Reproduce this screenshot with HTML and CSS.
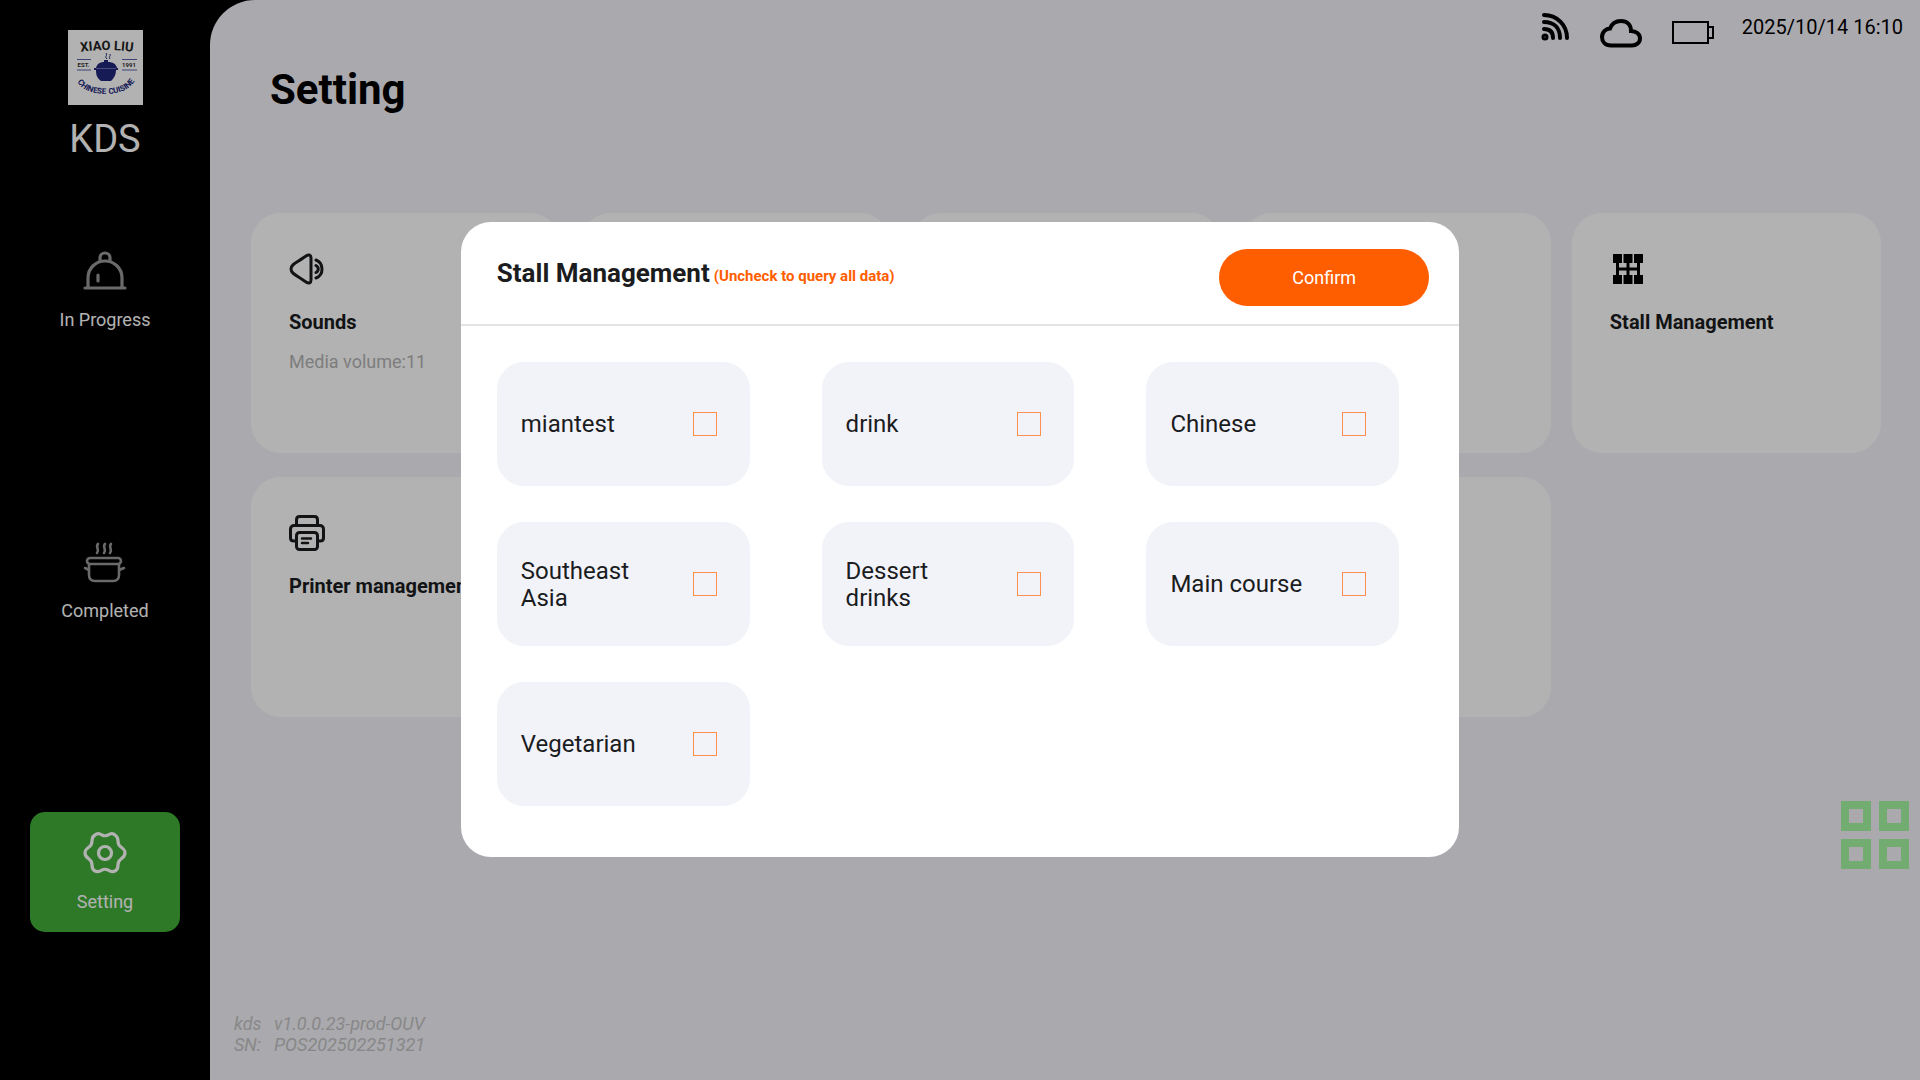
FILE: index.html
```html
<!DOCTYPE html>
<html lang="en">
<head>
<meta charset="utf-8">
<meta name="viewport" content="width=device-width, initial-scale=1">
<title>KDS</title>
<link rel="stylesheet" href="styles.css">
</head>
<body>
<div class="app">
  <aside class="sidebar">
    <svg class="logo" viewBox="0 0 75 75" role="img" aria-label="Xiao Liu Chinese Cuisine">
      <rect width="75" height="75" fill="#fff"/>
      <path id="arcTop" d="M9 22.500Q38 17.500 69 22.500" fill="none"/>
      <path id="arcBottom" d="M7 47Q13 64 38 64Q62 64 69 46" fill="none"/>
      <text class="logo-name"><textPath href="#arcTop" startOffset="50%">XIAO LIU</textPath></text>
      <text class="logo-tag"><textPath href="#arcBottom" startOffset="50%">CHINESE CUISINE</textPath></text>
      <text class="logo-year" x="15.500" y="37">EST.</text>
      <text class="logo-year" x="61" y="37">1991</text>
      <path d="M9 29.500h14M9 40h14M54 29.500h15M54 40h15" stroke="#5a61a8" fill="none"/>
      <path d="M39 29c-3-3 1-3-1-6M42 29c-2-3 1-2 0-5" stroke="#20267a" fill="none"/>
      <path d="M36 30h4v2c5 0 8 2 9 6h1v2h-2c0 5-2 8-5 11H33c-4-3-5-6-5-11h-2v-2h2c1-4 4-6 8-6z" fill="#20267a"/>
      <path d="M28 38.500h20" stroke="#6a6fb0"/>
    </svg>
    <p class="brand">KDS</p>
    <nav class="nav">
      <a class="nav-item" href="#progress">
        <svg class="nav-icon" viewBox="0 0 44 44" stroke-width="3.200">
          <path d="M2 39h40M5 38V29C5 19 13 12 22 12s17 7 17 17v10M17 12V9a5 5 0 0 1 10 0v3M15 26v6"/>
        </svg>
        <span>In Progress</span>
      </a>
      <a class="nav-item" href="#completed">
        <svg class="nav-icon" viewBox="0 0 44 44" stroke-width="2.600">
          <rect x="4" y="18" width="34" height="6" rx="3"/>
          <path d="M6 24v11c0 4 2 6 6 6h18c4 0 6-2 6-6V24M6 30l-4-2M36 30l5-2M15 4c-3 3 2 5-1 9M22 4c-3 3 2 5-1 9M28 4c-3 3 2 5-1 9"/>
        </svg>
        <span>Completed</span>
      </a>
      <a class="nav-item active" href="#setting" aria-current="page">
        <svg class="nav-icon" viewBox="0 0 44 44" stroke-width="3.200">
          <path d="M12 4C14 2 16 2 19 4Q22 5.500 25 4C28 2 30 2 32 4C35 6 35 8 35 10Q35 14 38 16C41 18 42 19 42 22C42 25 41 26 38 28Q35 30 35 34C35 37 34 39 32 40C30 41 28 41 25 39Q22 37.500 19 39C16 41 14 41 12 40C10 39 9 37 9 34Q9 30 6 28C3 26 2 25 2 22C2 19 3 18 6 16Q9 14 9 10C9 7 10 5 12 4Z"/>
          <circle cx="22" cy="22" r="6.500"/>
        </svg>
        <span>Setting</span>
      </a>
    </nav>
  </aside>

  <main class="main">
    <div class="status">
      <svg width="30" height="32" viewBox="0 0 30 32" fill="none" stroke="#000" stroke-width="4" stroke-linecap="round">
        <path d="M4 4C17 4 27 14 27 27M4 11C14 11 20 17 20 27M4 18C10 18 13 21 13 27"/><circle cx="5" cy="26" r="1.500"/>
      </svg>
      <svg class="cloud" width="44" height="32" viewBox="0 0 44 32" fill="none" stroke="#000" stroke-width="4">
        <path d="M12 28.500C6 28.500 3 24.500 3 20C3 15 7 11.500 11 11.500C13 6 17 4 22 4C28 4 32 8 32 14C37 14 41 17 41 21.500C41 26 37 28.500 33 28.500Z"/>
      </svg>
      <svg class="battery" width="42" height="24" viewBox="0 0 42 24" fill="none" stroke="#000" stroke-width="2">
        <rect x="1" y="1" width="35" height="21"/><path d="M36 6h5v11h-5"/>
      </svg>
      <time class="clock">2025/10/14 16:10</time>
    </div>
    <h1 class="page-title">Setting</h1>
    <section class="cards">
      <article class="card">
        <svg class="card-icon" viewBox="0 0 36 36" fill="none" stroke="#1b1c1e" stroke-width="3" stroke-linecap="round" stroke-linejoin="round">
          <path d="M22 7v22c0 3-2 4-5 2L14 29C9 25 2 23 2 18S9 11 14 7L17 5C20 3 22 4 22 7ZM27 9C35 12 35 24 27 27M27 14.500C30 16 30 20 27 21.500"/>
        </svg>
        <h2>Sounds</h2>
        <p>Media volume:11</p>
      </article>
      <article class="card"></article>
      <article class="card"></article>
      <article class="card"></article>
      <article class="card">
        <svg class="card-icon" viewBox="0 0 36 36">
          <path d="M3 3h9v9H3zM13.500 3h9v9h-9zM24 3h9v9h-9zM3 24h9v9H3zM13.500 24h9v9h-9zM24 24h9v9h-9z"/>
          <path d="M7.500 10v16M18 10v16M28.500 10v16M7.500 18h21" stroke="#000" stroke-width="3"/>
        </svg>
        <h2>Stall Management</h2>
      </article>
      <article class="card">
        <svg class="card-icon" viewBox="0 0 36 36" fill="none" stroke="#1b1c1e" stroke-width="3" stroke-linecap="round" stroke-linejoin="round">
          <path d="M7.500 10V5c0-2 1-3.500 3-3.500h15c2 0 3 1.500 3 3.500v5M7 26H5c-2 0-3.500-1-3.500-3v-9c0-2 1.500-3.500 3.500-3.500h26c2 0 3.500 1.500 3.500 3.500v9c0 2-1.500 3-3.500 3h-2"/>
          <rect x="7.500" y="17.500" width="21" height="17" rx="3"/>
          <path d="M13 23.500h9M13 28h6" stroke-width="2.500"/>
        </svg>
        <h2>Printer management</h2>
      </article>
      <article class="card"></article>
      <article class="card"></article>
      <article class="card"></article>
    </section>
    <dl class="device">
      <dt>kds</dt><dd>v1.0.0.23-prod-OUV</dd>
      <dt>SN:</dt><dd>POS202502251321</dd>
    </dl>
  </main>
</div>

<button class="apps" type="button" aria-label="Apps"><i></i><i></i><i></i><i></i></button>

<div class="overlay">
  <form class="dialog" role="dialog" aria-modal="true" aria-labelledby="dialog-title">
    <header class="dialog-head">
      <div class="dialog-heading">
        <h2 id="dialog-title">Stall Management</h2>
        <span class="hint">(Uncheck to query all data)</span>
      </div>
      <button class="confirm" type="button">Confirm</button>
    </header>
    <div class="stalls">
      <label class="stall"><span>miantest</span><input type="checkbox"></label>
      <label class="stall"><span>drink</span><input type="checkbox"></label>
      <label class="stall"><span>Chinese</span><input type="checkbox"></label>
      <label class="stall"><span>Southeast Asia</span><input type="checkbox"></label>
      <label class="stall"><span>Dessert drinks</span><input type="checkbox"></label>
      <label class="stall"><span>Main course</span><input type="checkbox"></label>
      <label class="stall"><span>Vegetarian</span><input type="checkbox"></label>
    </div>
  </form>
</div>
</body>
</html>
```
FILE: styles.css
```css
* {
  box-sizing: border-box;
  margin: 0;
  padding: 0;
}

body {
  background: #000;
  color: #1b1c1e;
  font-family: Roboto, "Liberation Sans", sans-serif;
}

.app {
  display: flex;
  min-height: 100vh;
}

/* Sidebar */
.sidebar {
  display: flex;
  flex: 0 0 210px;
  flex-direction: column;
  align-items: center;
  padding-top: 30px;
  color: #fff;
}

.logo {
  width: 75px;
  height: 75px;
}

.logo text {
  font-family: Roboto, sans-serif;
  font-weight: 700;
  text-anchor: middle;
}

.logo-name {
  font-size: 13px;
  fill: #222;
}

.logo-tag {
  font-size: 8px;
  fill: #20267a;
}

.logo-year {
  font-size: 6px;
  fill: #333;
}

.brand {
  margin-top: 10px;
  font-size: 38px;
  line-height: 48px;
}

.nav {
  display: flex;
  flex-direction: column;
  gap: 171px;
  width: 150px;
  margin-top: 67px;
}

.nav-item {
  display: flex;
  flex-direction: column;
  align-items: center;
  gap: 14px;
  height: 120px;
  padding-top: 19px;
  border-radius: 15px;
  color: #fff;
  font-size: 18px;
  line-height: 26px;
  text-decoration: none;
}

.nav-icon {
  width: 44px;
  height: 44px;
  fill: none;
  stroke: #999;
  stroke-linecap: round;
  stroke-linejoin: round;
}

.nav-item.active {
  background: #42ae38;
}

.active .nav-icon {
  stroke: #fff;
}

/* Page */
.main {
  display: flex;
  flex: 1;
  flex-direction: column;
  min-width: 0;
  border-top-left-radius: 45px;
  background: #f4f3fa;
}

.status {
  display: flex;
  align-items: flex-start;
  justify-content: flex-end;
  height: 60px;
  padding: 11px 17px 0 0;
}

.cloud {
  margin: 6px 0 0 29px;
}

.battery {
  margin: 10px 0 0 29px;
}

.clock {
  margin-left: 28px;
  color: #000;
  font-size: 20px;
  line-height: 32px;
}

.page-title {
  padding-left: 60px;
  color: #000;
  font-size: 42px;
  line-height: 60px;
}

.cards {
  display: grid;
  grid-template-columns: repeat(5, 1fr);
  gap: 24px 21px;
  margin-top: 93px;
  padding: 0 39px 0 41px;
}

.card {
  min-height: 240px;
  padding: 38px;
  border-radius: 30px;
  background: #fff;
}

.card-icon {
  display: block;
  width: 36px;
  height: 36px;
}

.card h2 {
  margin-top: 21px;
  font-size: 20px;
  line-height: 28px;
  white-space: nowrap;
}

.card p {
  margin-top: 13px;
  color: #b4b4b4;
  font-size: 18px;
  line-height: 26px;
}

.device {
  display: grid;
  grid-template-columns: 40px 1fr;
  margin-top: auto;
  padding: 0 0 25px 24px;
  color: #c3c3c3;
  font-size: 18px;
  font-style: italic;
  line-height: 21px;
}

.apps {
  position: fixed;
  right: 11px;
  bottom: 211px;
  display: grid;
  grid-template-columns: 30px 30px;
  gap: 8px;
  border: 0;
  background: none;
}

.apps i {
  height: 30px;
  border: 8px solid #a4f7a3;
}

/* Dialog */
.overlay {
  position: fixed;
  inset: 0;
  display: flex;
  align-items: center;
  justify-content: center;
  padding-bottom: 2px;
  background: rgba(0, 0, 0, 0.3);
}

.dialog {
  width: 52%;
  border-radius: 30px;
  background: #fff;
}

.dialog-head {
  display: flex;
  align-items: center;
  justify-content: space-between;
  padding: 27px 30px 18px 36px;
  border-bottom: 2px solid #e4e4e4;
}

.dialog-heading {
  display: flex;
  align-items: center;
  gap: 4px;
  padding-bottom: 8px;
}

.dialog-heading h2 {
  font-size: 26px;
  line-height: 36px;
}

.hint {
  padding-top: 6px;
  color: #ff5e00;
  font-size: 15px;
  font-weight: 700;
}

.confirm {
  width: 210px;
  height: 57px;
  border: 0;
  border-radius: 29px;
  background: #ff5e00;
  color: #fff;
  font-family: inherit;
  font-size: 18px;
}

.stalls {
  display: grid;
  grid-template-columns: repeat(3, 1fr);
  gap: 36px 72px;
  padding: 36px 60px 51px 36px;
}

.stall {
  display: flex;
  align-items: center;
  justify-content: space-between;
  gap: 30px;
  min-height: 124px;
  padding: 0 33px 0 24px;
  border-radius: 27px;
  background: #f2f3f9;
  font-size: 24px;
  line-height: 27px;
}

.stall span {
  padding-top: 2px;
}

.stall input {
  flex: none;
  width: 24px;
  height: 24px;
  border: 1px solid #ff8f4e;
  appearance: none;
}
```
